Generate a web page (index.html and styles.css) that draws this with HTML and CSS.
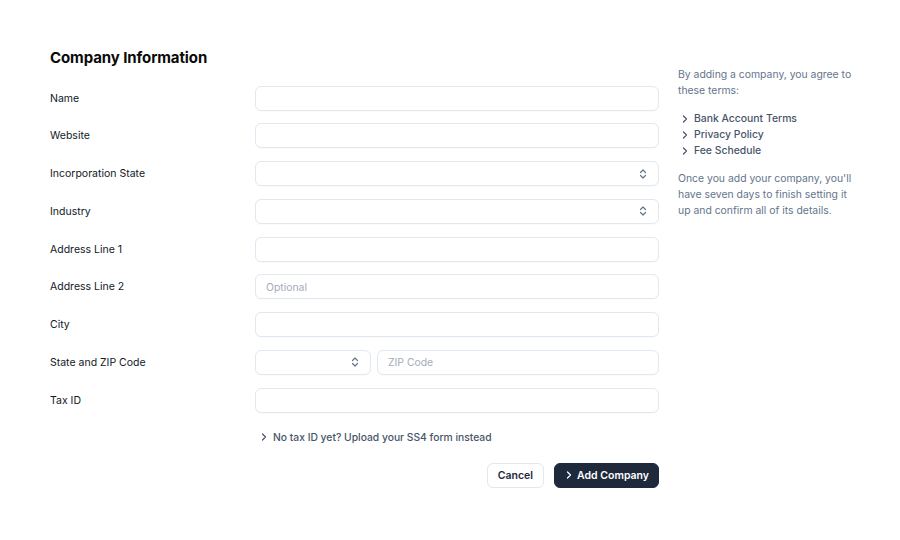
FILE: index.html
```html
<!DOCTYPE html>
<html lang="en">
<head>
<meta charset="utf-8">
<title>Company Information</title>
<link rel="stylesheet" href="styles.css">
</head>
<body>
<div class="page">
  <section class="form-col">
    <h1 class="title">Company Information</h1>
    <div class="form-grid">
      <label class="label">Name</label>
      <div class="input"></div>

      <label class="label">Website</label>
      <div class="input"></div>

      <label class="label">Incorporation State</label>
      <div class="input select">
        <svg class="updown" viewBox="0 0 10 12" width="10" height="12"><path d="M2.5 4.5 5 2l2.5 2.5M2.5 7.5 5 10l2.5-2.5" fill="none" stroke="#64748b" stroke-width="1.2" stroke-linecap="round" stroke-linejoin="round"/></svg>
      </div>

      <label class="label">Industry</label>
      <div class="input select">
        <svg class="updown" viewBox="0 0 10 12" width="10" height="12"><path d="M2.5 4.5 5 2l2.5 2.5M2.5 7.5 5 10l2.5-2.5" fill="none" stroke="#64748b" stroke-width="1.2" stroke-linecap="round" stroke-linejoin="round"/></svg>
      </div>

      <label class="label">Address Line 1</label>
      <div class="input"></div>

      <label class="label">Address Line 2</label>
      <div class="input"><span class="placeholder">Optional</span></div>

      <label class="label">City</label>
      <div class="input"></div>

      <label class="label">State and ZIP Code</label>
      <div class="split">
        <div class="input select state">
          <svg class="updown" viewBox="0 0 10 12" width="10" height="12"><path d="M2.5 4.5 5 2l2.5 2.5M2.5 7.5 5 10l2.5-2.5" fill="none" stroke="#64748b" stroke-width="1.2" stroke-linecap="round" stroke-linejoin="round"/></svg>
        </div>
        <div class="input zip"><span class="placeholder">ZIP Code</span></div>
      </div>

      <label class="label">Tax ID</label>
      <div class="input"></div>

      <div></div>
      <div class="link">
        <svg class="chev" viewBox="0 0 8 10" width="8" height="10"><path d="M2.5 2 5.5 5l-3 3" fill="none" stroke="#475569" stroke-width="1.2" stroke-linecap="round" stroke-linejoin="round"/></svg>
        <span>No tax ID yet? Upload your SS4 form instead</span>
      </div>
    </div>
    <div class="actions">
      <button class="btn btn-secondary">Cancel</button>
      <button class="btn btn-primary">
        <svg class="chev" viewBox="0 0 8 10" width="8" height="10"><path d="M2.5 2 5.5 5l-3 3" fill="none" stroke="#ffffff" stroke-width="1.3" stroke-linecap="round" stroke-linejoin="round"/></svg>
        <span>Add Company</span>
      </button>
    </div>
  </section>
  <aside class="aside">
    <p>By adding a company, you agree to these terms:</p>
    <ul class="terms">
      <li><svg class="chev" viewBox="0 0 8 10" width="8" height="10"><path d="M2.5 2 5.5 5l-3 3" fill="none" stroke="#475569" stroke-width="1.2" stroke-linecap="round" stroke-linejoin="round"/></svg>Bank Account Terms</li>
      <li><svg class="chev" viewBox="0 0 8 10" width="8" height="10"><path d="M2.5 2 5.5 5l-3 3" fill="none" stroke="#475569" stroke-width="1.2" stroke-linecap="round" stroke-linejoin="round"/></svg>Privacy Policy</li>
      <li><svg class="chev" viewBox="0 0 8 10" width="8" height="10"><path d="M2.5 2 5.5 5l-3 3" fill="none" stroke="#475569" stroke-width="1.2" stroke-linecap="round" stroke-linejoin="round"/></svg>Fee Schedule</li>
    </ul>
    <p>Once you add your company, you'll have seven days to finish setting it up and confirm all of its details.</p>
  </aside>
</div>
</body>
</html>
```

FILE: styles.css
```css
* { box-sizing: border-box; }
html, body { margin: 0; padding: 0; background: #ffffff; }
body {
  font-family: Inter, "Noto Sans", "Liberation Sans", sans-serif;
  color: #0f172a;
  -webkit-font-smoothing: antialiased;
}
.page {
  display: flex;
  align-items: flex-start;
  gap: 19px;
  padding: 48px 0 0 50px;
}
.form-col {
  width: 609px;
  display: flex;
  flex-direction: column;
}
.title {
  margin: 0;
  font-size: 15px;
  line-height: 20px;
  font-weight: 700;
  color: #0a0a0a;
  letter-spacing: -0.1px;
}
.form-grid {
  margin-top: 17.5px;
  display: grid;
  grid-template-columns: 205px 404px;
  row-gap: 12.75px;
  align-items: center;
}
.label {
  font-size: 10.5px;
  line-height: 16px;
  padding-top: 1px;
  color: #111827;
}
.input {
  height: 25px;
  border: 1px solid #e2e8f0;
  border-radius: 6px;
  background: #fff;
  display: flex;
  align-items: center;
  padding: 0 10px;
  box-shadow: 0 1px 1px rgba(15, 23, 42, 0.02);
}
.select { justify-content: flex-end; padding-right: 10px; }
.updown { display: block; }
.placeholder {
  font-size: 10.4px;
  color: #a3adba;
  padding-top: 1px;
}
.split {
  display: flex;
  gap: 6px;
}
.state { width: 116px; flex: none; }
.zip { flex: 1; }
.link {
  display: flex;
  align-items: center;
  gap: 5px;
  padding-left: 5px;
  font-size: 10.3px;
  line-height: 24px;
  color: #475569;
  margin-top: 0;
  font-weight: 500;
}
.chev { display: block; flex: none; }
.actions {
  display: flex;
  justify-content: flex-end;
  gap: 10px;
  margin-top: 13.5px;
}
.btn {
  height: 25px;
  border-radius: 6px;
  font-family: inherit;
  font-size: 10.5px;
  font-weight: 600;
  display: flex;
  align-items: center;
  cursor: pointer;
}
.btn-secondary {
  background: #fff;
  border: 1px solid #e2e8f0;
  color: #1e293b;
  padding: 0 10px;
}
.btn-primary {
  background: #1e293b;
  border: 1px solid #1e293b;
  color: #fff;
  padding: 0 9px 0 10px;
  gap: 4px;
}
.aside {
  width: 176px;
  margin-top: 19px;
  font-size: 10.4px;
  line-height: 16px;
  color: #64748b;
}
.aside p { margin: 0; }
.terms {
  list-style: none;
  margin: 12px 0 12px 0;
  padding: 0;
  color: #475569;
  font-weight: 500;
}
.terms li {
  display: flex;
  align-items: center;
  gap: 5px;
  padding-left: 3px;
}
```
